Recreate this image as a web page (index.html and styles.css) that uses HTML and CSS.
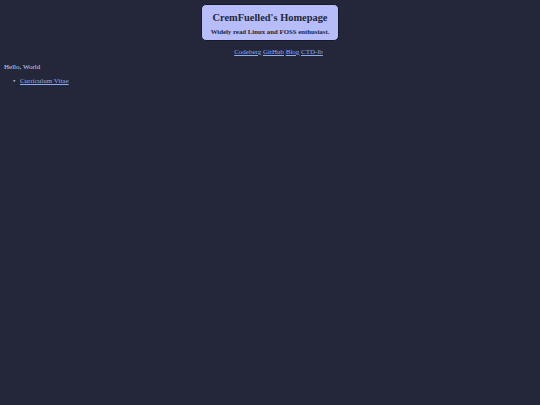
FILE: index.html
```html
<!DOCTYPE html>
<html>
<head>
<meta charset="utf-8">
<link rel="stylesheet" href="styles.css">
</head>
<body>
<header class="header">
  <div class="card">
    <h1 class="title">CremFuelled's Homepage</h1>
    <p class="subtitle">Widely read Linux and FOSS enthusiast.</p>
  </div>
</header>
<nav class="nav">
  <a href="#">Codeberg</a> <a href="#">GitHub</a> <a href="#">Blog</a> <a href="#">CTD-lb</a>
</nav>
<p class="hello">Hello, World</p>
<ul class="list">
  <li><a href="#">Curriculum Vitae</a></li>
</ul>
</body>
</html>
```
FILE: styles.css
```css
html, body {
  margin: 0;
  padding: 0;
  background: #24273a;
  color: #cad3f5;
  font-family: "Liberation Serif", serif;
  font-size: 7px;
  line-height: 8px;
}
body { padding: 4px 4px; }
a { color: #8aadf4; }
.header {
  display: flex;
  justify-content: center;
}
.card {
  background: #b7bdf8;
  color: #24273a;
  border: 1px solid #181926;
  border-radius: 5px;
  padding: 6.5px 9px 4.5px;
  text-align: center;
}
.title {
  margin: 0;
  font-size: 10.4px;
  font-weight: bold;
  line-height: 12px;
}
.subtitle {
  margin: 4px 0 0;
  font-size: 6.8px;
  font-weight: bold;
  line-height: 8px;
}
.nav {
  text-align: center;
  margin: 7px 0 0 17px;
}
.hello { margin: 6.5px 0 0; }
.list {
  margin: 6.5px 0 0;
  padding-left: 9px;
  list-style: none;
}
.list li::before {
  content: "\2022";
  margin-right: 4.5px;
  color: #cad3f5;
}
```
